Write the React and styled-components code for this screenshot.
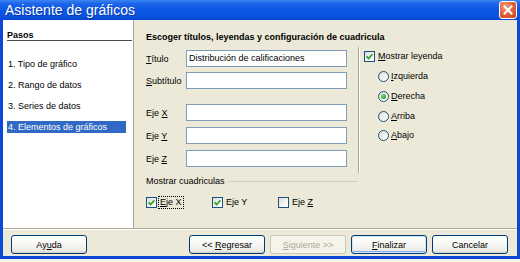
import React from 'react';
import styled, { createGlobalStyle } from 'styled-components';

const Global = createGlobalStyle`
  html, body { margin: 0; padding: 0; }
  body {
    background: #f4f4f2;
    font-family: "Liberation Sans", Arial, sans-serif;
    font-size: 9px;
    color: #000;
  }
  #root { width: 520px; height: 262px; overflow: hidden; }
`;

const Window = styled.div`
  width: 520px;
  height: 259px;
  display: flex;
  flex-direction: column;
`;

const TitleBar = styled.div`
  height: 20px;
  flex: none;
  display: flex;
  align-items: center;
  justify-content: space-between;
  padding: 0 3px 0 5px;
  background: linear-gradient(180deg, #3a86f2 0%, #1d64ea 18%, #0b57e4 50%, #0a53df 82%, #0846cf 100%);
`;

const TitleText = styled.span`
  font-family: "Liberation Sans", Arial, sans-serif;
  font-size: 14px;
  color: #fff;
  text-shadow: 1px 1px 0 rgba(10, 30, 120, 0.55);
  line-height: 20px;
`;

const CloseButton = styled.div`
  width: 18px;
  height: 18px;
  box-sizing: border-box;
  border: 1px solid #fff;
  border-radius: 3px;
  background: radial-gradient(circle at 35% 30%, #f0a088 0%, #e2633f 45%, #c8431e 100%);
  display: flex;
  align-items: center;
  justify-content: center;
`;

const Frame = styled.div`
  flex: 1;
  display: flex;
  flex-direction: column;
  border: 3px solid #0c47d8;
  border-top: none;
  background: #ece9d8;
`;

const Main = styled.div`
  height: 208px;
  display: flex;
  border-bottom: 1px solid #aca899;
`;

const StepsPanel = styled.div`
  width: 130px;
  background: #fff;
  border-right: 1px solid #aca899;
  padding-top: 11px;
  box-sizing: content-box;
`;

const StepsHeader = styled.div`
  margin-left: 4px;
  width: 125px;
  font-weight: bold;
  line-height: 9px;
  border-bottom: 1px solid #4a4a4a;
`;

const StepList = styled.div`
  margin-top: 17px;
  display: flex;
  flex-direction: column;
  gap: 9px;
`;

const Step = styled.div`
  margin-left: 4px;
  width: 119px;
  height: 12px;
  line-height: 12px;
  padding-left: 1px;
  box-sizing: border-box;
  color: ${p => (p.$active ? '#fff' : '#000')};
  background: ${p => (p.$active ? '#316ac5' : 'transparent')};
`;

const ContentPanel = styled.div`
  flex: 1;
  padding: 12px 0 0 12px;
`;

const Heading = styled.div`
  font-weight: bold;
  line-height: 11px;
`;

const Content = styled.div`
  display: flex;
  align-items: flex-start;
  margin-top: 4px;
`;

const Fields = styled.div`
  width: 201px;
  padding-top: 3px;
  display: flex;
  flex-direction: column;
`;

const FieldRow = styled.div`
  display: flex;
  align-items: center;
  height: 17px;
  margin-top: ${p => p.$gap || 0}px;
`;

const Label = styled.span`
  width: 40px;
  flex: none;
`;

const Input = styled.div`
  width: 161px;
  height: 17px;
  box-sizing: border-box;
  border: 1px solid #7f9db9;
  background: #fff;
  padding-left: 2px;
  line-height: 15px;
  white-space: nowrap;
  overflow: hidden;
`;

const VSeparator = styled.div`
  width: 1px;
  height: 126px;
  margin-left: 11px;
  background: #aca899;
  border-right: 1px solid #fff;
`;

const Legend = styled.div`
  margin-left: 4px;
  padding-top: 3px;
  display: flex;
  flex-direction: column;
`;

const OptionRow = styled.div`
  display: flex;
  align-items: center;
  height: 12px;
  margin-left: ${p => p.$indent || 0}px;
  margin-top: ${p => p.$gap || 0}px;
`;

const OptionText = styled.span`
  margin-left: ${p => p.$gap ?? 2}px;
  padding: 0 1px;
  line-height: 11px;
  border: 1px ${p => (p.$focus ? 'dotted #000' : 'solid transparent')};
`;

const Box = styled.span`
  width: 11px;
  height: 11px;
  flex: none;
  box-sizing: border-box;
  border: 1px solid #1c5180;
  background: linear-gradient(135deg, #dcdcd7 0%, #fbfbf9 80%, #ffffff 100%);
  display: flex;
  align-items: center;
  justify-content: center;
`;

const RadioCircle = styled(Box)`
  border-radius: 50%;
`;

const Dot = styled.span`
  width: 5px;
  height: 5px;
  border-radius: 50%;
  background: radial-gradient(circle at 35% 35%, #7fe07f 0%, #2fb42f 55%, #1a8c1a 100%);
`;

const GridTitle = styled.div`
  display: flex;
  align-items: center;
  width: 212px;
  margin-top: 3px;
  line-height: 11px;
  color: #000;
`;

const GridLine = styled.span`
  flex: 1;
  height: 1px;
  margin-left: 3px;
  background: #d0d0bf;
`;

const GridChecks = styled.div`
  display: flex;
  margin-top: 9px;
`;

const GridItem = styled.div`
  width: 66px;
  display: flex;
  align-items: center;
  height: 13px;
`;

const Footer = styled.div`
  height: 26px;
  border-top: 1px solid #fff;
  display: flex;
  justify-content: space-between;
  padding: 5px 9px 0 8px;
  box-sizing: border-box;
  height: 27px;
`;

const ButtonGroup = styled.div`
  display: flex;
  gap: 5px;
`;

const Button = styled.button`
  width: 76px;
  height: 19px;
  box-sizing: border-box;
  padding: 0;
  font-family: "Liberation Sans", Arial, sans-serif;
  font-size: 9px;
  color: ${p => (p.disabled ? '#aca899' : '#000')};
  border: 1px solid ${p => (p.disabled ? '#c9c7ba' : '#003c74')};
  border-radius: 3px;
  background: ${p =>
    p.disabled
      ? '#f5f4ea'
      : 'linear-gradient(180deg, #ffffff 0%, #f7f7f4 50%, #ecebe6 85%, #d6d0c5 100%)'};
  box-shadow: ${p =>
    p.$default ? 'inset 0 0 0 1px #cee7ff, inset 0 -1px 0 1px #89adeb' : 'none'};
`;

const Mn = styled.span`
  text-decoration: underline;
`;

const Check = () => (
  <svg width="9" height="9" viewBox="0 0 9 9">
    <path d="M1.6 4.4 L3.6 6.5 L7.4 2.2" fill="none" stroke="#21a121" strokeWidth="1.6" />
  </svg>
);

const Checkbox = ({ checked }) => <Box>{checked && <Check />}</Box>;
const Radio = ({ checked }) => <RadioCircle>{checked && <Dot />}</RadioCircle>;

export default function App() {
  return (
    <>
      <Global />
      <Window>
        <TitleBar>
          <TitleText>Asistente de gráficos</TitleText>
          <CloseButton>
            <svg width="10" height="10" viewBox="0 0 10 10">
              <path d="M1.5 1.5 L8.5 8.5 M8.5 1.5 L1.5 8.5" stroke="#fff" strokeWidth="2" strokeLinecap="square" />
            </svg>
          </CloseButton>
        </TitleBar>
        <Frame>
          <Main>
            <StepsPanel>
              <StepsHeader>Pasos</StepsHeader>
              <StepList>
                <Step>1. Tipo de gráfico</Step>
                <Step>2. Rango de datos</Step>
                <Step>3. Series de datos</Step>
                <Step $active>4. Elementos de gráficos</Step>
              </StepList>
            </StepsPanel>
            <ContentPanel>
              <Heading>Escoger títulos, leyendas y configuración de cuadricula</Heading>
              <Content>
                <Fields>
                  <FieldRow>
                    <Label><Mn>T</Mn>ítulo</Label>
                    <Input>Distribución de calificaciones</Input>
                  </FieldRow>
                  <FieldRow $gap={5}>
                    <Label><Mn>S</Mn>ubtítulo</Label>
                    <Input />
                  </FieldRow>
                  <FieldRow $gap={15}>
                    <Label>Eje <Mn>X</Mn></Label>
                    <Input />
                  </FieldRow>
                  <FieldRow $gap={6}>
                    <Label>Eje <Mn>Y</Mn></Label>
                    <Input />
                  </FieldRow>
                  <FieldRow $gap={6}>
                    <Label>Eje <Mn>Z</Mn></Label>
                    <Input />
                  </FieldRow>
                </Fields>
                <VSeparator />
                <Legend>
                  <OptionRow>
                    <Checkbox checked />
                    <OptionText $gap={1}><Mn>M</Mn>ostrar leyenda</OptionText>
                  </OptionRow>
                  <OptionRow $indent={14} $gap={8}>
                    <Radio />
                    <OptionText $gap={0}><Mn>I</Mn>zquierda</OptionText>
                  </OptionRow>
                  <OptionRow $indent={14} $gap={8}>
                    <Radio checked />
                    <OptionText $gap={0}><Mn>D</Mn>erecha</OptionText>
                  </OptionRow>
                  <OptionRow $indent={14} $gap={8}>
                    <Radio />
                    <OptionText $gap={0}><Mn>A</Mn>rriba</OptionText>
                  </OptionRow>
                  <OptionRow $indent={14} $gap={7}>
                    <Radio />
                    <OptionText $gap={0}><Mn>A</Mn>bajo</OptionText>
                  </OptionRow>
                </Legend>
              </Content>
              <GridTitle>
                Mostrar cuadriculas
                <GridLine />
              </GridTitle>
              <GridChecks>
                <GridItem>
                  <Checkbox checked />
                  <OptionText $gap={1} $focus><Mn>E</Mn>je X</OptionText>
                </GridItem>
                <GridItem>
                  <Checkbox checked />
                  <OptionText $gap={1}>E<Mn>j</Mn>e Y</OptionText>
                </GridItem>
                <GridItem>
                  <Checkbox />
                  <OptionText $gap={1}>Eje <Mn>Z</Mn></OptionText>
                </GridItem>
              </GridChecks>
            </ContentPanel>
          </Main>
          <Footer>
            <Button>Ay<Mn>u</Mn>da</Button>
            <ButtonGroup>
              <Button>&lt;&lt; <Mn>R</Mn>egresar</Button>
              <Button disabled><Mn>S</Mn>iguiente &gt;&gt;</Button>
              <Button $default><Mn>F</Mn>inalizar</Button>
              <Button>Cancelar</Button>
            </ButtonGroup>
          </Footer>
        </Frame>
      </Window>
    </>
  );
}
